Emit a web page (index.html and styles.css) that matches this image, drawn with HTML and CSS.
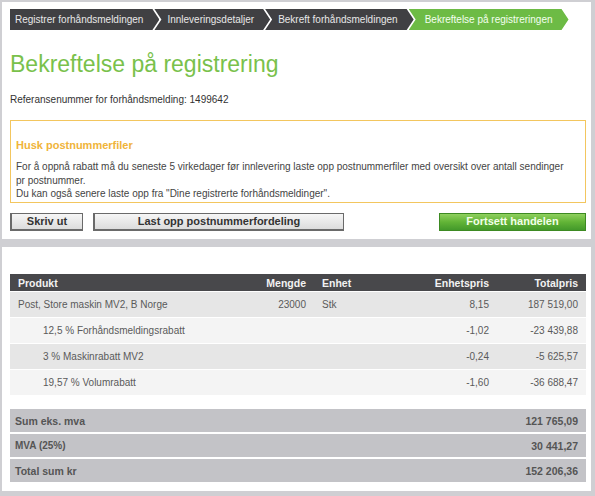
FILE: index.html
```html
<!DOCTYPE html>
<html lang="no">
<head>
<meta charset="utf-8">
<title>Bekreftelse på registrering</title>
<link rel="stylesheet" href="styles.css">
</head>
<body>
<div class="page">
  <section class="panel top">
    <nav class="steps">
      <span class="step first">Registrer forhåndsmeldingen</span>
      <span class="step">Innleveringsdetaljer</span>
      <span class="step">Bekreft forhåndsmeldingen</span>
      <span class="step active">Bekreftelse på registreringen</span>
    </nav>
    <h1 class="title">Bekreftelse på registrering</h1>
    <p class="ref">Referansenummer for forhåndsmelding: 1499642</p>
    <div class="notice">
      <h2 class="notice-title">Husk postnummerfiler</h2>
      <p class="notice-text">For å oppnå rabatt må du seneste 5 virkedager før innlevering laste opp postnummerfiler med oversikt over antall sendinger<br>pr postnummer.<br>Du kan også senere laste opp fra "Dine registrerte forhåndsmeldinger".</p>
    </div>
    <div class="actions">
      <button class="btn btn-print">Skriv ut</button>
      <button class="btn btn-upload">Last opp postnummerfordeling</button>
      <span class="spacer"></span>
      <button class="btn btn-go">Fortsett handelen</button>
    </div>
  </section>
  <section class="panel bottom">
    <table class="items">
      <colgroup>
        <col class="c1"><col class="c2"><col class="c3"><col class="c4"><col class="c5">
      </colgroup>
      <thead>
        <tr><th class="l">Produkt</th><th class="r">Mengde</th><th class="l unit">Enhet</th><th class="r">Enhetspris</th><th class="r last">Totalpris</th></tr>
      </thead>
      <tbody>
        <tr class="odd"><td class="l">Post, Store maskin MV2, B Norge</td><td class="r">23000</td><td class="l unit">Stk</td><td class="r">8,15</td><td class="r last">187 519,00</td></tr>
        <tr class="even"><td class="l sub">12,5 % Forhåndsmeldingsrabatt</td><td></td><td></td><td class="r">-1,02</td><td class="r last">-23 439,88</td></tr>
        <tr class="odd"><td class="l sub">3 % Maskinrabatt MV2</td><td></td><td></td><td class="r">-0,24</td><td class="r last">-5 625,57</td></tr>
        <tr class="even"><td class="l sub">19,57 % Volumrabatt</td><td></td><td></td><td class="r">-1,60</td><td class="r last">-36 688,47</td></tr>
      </tbody>
    </table>
    <div class="sums">
      <div class="sum-row"><span>Sum eks. mva</span><span>121 765,09</span></div>
      <div class="sum-row"><span class="small">MVA (25%)</span><span>30 441,27</span></div>
      <div class="sum-row"><span>Total sum kr</span><span>152 206,36</span></div>
    </div>
  </section>
</div>
</body>
</html>
```

FILE: styles.css
```css
html, body {
  margin: 0;
  padding: 0;
  background: #cfcfd3;
}
body {
  font-family: "Liberation Sans", Arial, sans-serif;
  font-size: 10px;
  color: #444;
}
.page {
  padding: 2px 4px 5px 2px;
  display: flex;
  flex-direction: column;
  gap: 8px;
}
.panel {
  background: #fff;
  padding: 0 5px 0 8px;
}
.panel.top {
  padding-top: 7px;
  padding-bottom: 7px;
  height: 223px;
}
.panel.bottom {
  padding-top: 27px;
  padding-bottom: 9px;
}

/* steps */
.steps {
  display: flex;
  height: 21px;
}
.step {
  display: block;
  height: 21px;
  line-height: 21px;
  background: #404043;
  color: #e8e8e8;
  font-size: 10px;
  padding: 0 16px 0 13px;
  margin-left: -5px;
  clip-path: polygon(0 0, calc(100% - 7px) 0, 100% 50%, calc(100% - 7px) 100%, 0 100%, 7px 50%);
  white-space: nowrap;
}
.step.first {
  margin-left: 0;
  padding-left: 5px;
  clip-path: polygon(0 0, calc(100% - 7px) 0, 100% 50%, calc(100% - 7px) 100%, 0 100%);
}
.step.active {
  background: #6dbb45;
  color: #f4fff0;
  padding-left: 16px;
  padding-right: 16px;
}

.title {
  margin: 20px 0 0;
  font-size: 23px;
  line-height: 28px;
  font-weight: normal;
  color: #79c14b;
}
.ref {
  margin: 15px 0 0;
  line-height: 14px;
  color: #333;
}

.notice {
  margin-top: 13px;
  border: 1px solid #f3c65e;
  padding: 17px 5px 1px 5px;
}
.notice-title {
  margin: 0;
  font-size: 11px;
  line-height: 14px;
  color: #f0b43a;
  font-weight: bold;
}
.notice-text {
  margin: 8px 0 0;
  line-height: 13.5px;
  color: #444;
  white-space: nowrap;
}

.actions {
  display: flex;
  margin-top: 10px;
  height: 18px;
  gap: 10px;
}
.spacer { flex: 1; }
.btn {
  font-family: "Liberation Sans", Arial, sans-serif;
  font-size: 11px;
  font-weight: bold;
  height: 18px;
  padding: 0;
  margin: 0;
  line-height: 15px;
  cursor: pointer;
}
.btn-print, .btn-upload {
  color: #333;
  background: linear-gradient(#f6f6f6, #dcdcdc);
  border: 1px solid #6a6a6a;
  border-left-width: 2px;
  border-bottom-width: 2px;
}
.btn-print { width: 73px; }
.btn-upload { width: 251px; }
.btn-go {
  width: 147px;
  color: #f2ffe8;
  background: linear-gradient(#8fd05e, #62b436 50%, #43992a);
  border: 1px solid #3d8a22;
}

/* table */
.items {
  width: 576px;
  border-collapse: collapse;
  table-layout: fixed;
}
.c1 { width: 248px; }
.c2 { width: 54px; }
.c3 { width: 88px; }
.c4 { width: 95px; }
.c5 { width: 91px; }
.items th {
  background: #48484b;
  color: #f2f2f2;
  font-weight: bold;
  font-size: 10.5px;
  height: 17px;
  padding: 0 6px 0 8px;
}
.items td {
  height: 25px;
  padding: 0 6px 0 8px;
  color: #5a5a5a;
  border-top: 1px solid #fff;
}
.items tr.odd td { background: #e6e6e6; }
.items tr.even td { background: #f4f4f4; }
.items .l { text-align: left; }
.items .r { text-align: right; }
.items .unit { padding-left: 10px; }
.items .last { padding-right: 8px; }
.items td.sub { padding-left: 33px; }

.sums {
  margin-top: 14px;
  display: flex;
  flex-direction: column;
  gap: 2px;
  width: 576px;
}
.sum-row {
  display: flex;
  justify-content: space-between;
  align-items: center;
  height: 23px;
  background: #c3c3c7;
  padding: 0 8px 0 5px;
  font-weight: bold;
  font-size: 10.5px;
  color: #555;
}
.sum-row .small { font-size: 10px; }
```
